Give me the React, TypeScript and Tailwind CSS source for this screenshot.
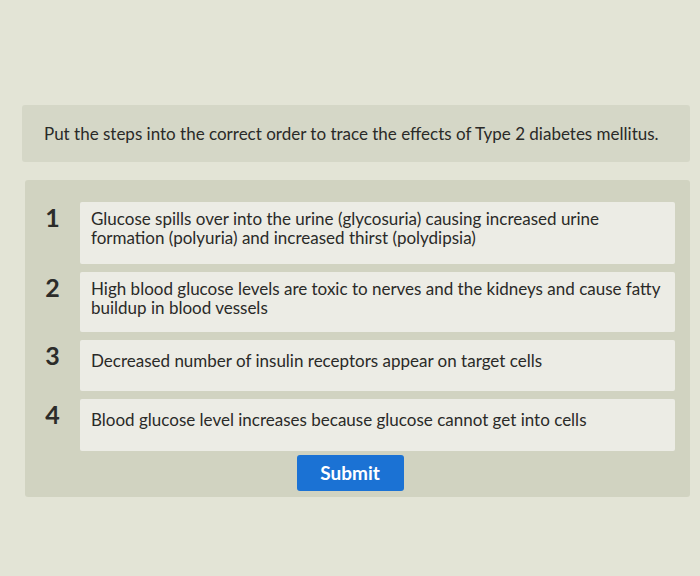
import React from 'react';

const steps = [
  'Glucose spills over into the urine (glycosuria) causing increased urine formation (polyuria) and increased thirst (polydipsia)',
  'High blood glucose levels are toxic to nerves and the kidneys and cause fatty buildup in blood vessels',
  'Decreased number of insulin receptors appear on target cells',
  'Blood glucose level increases because glucose cannot get into cells',
];

const rowHeights = ['h-[62px]', 'h-[60px]', 'h-[51px]', 'h-[52px]'];

const App: React.FC = () => {
  return (
    <div
      className="w-[700px] h-[576px] overflow-hidden bg-[#e3e4d6] pt-[105px] pl-[22px] pr-[10px]"
      style={{ fontFamily: 'Lato, "Open Sans", sans-serif' }}
    >
      <div className="h-[57px] rounded-[3px] bg-[#d5d7c7] pl-[22px] flex items-center text-[17px] text-[#2a2a28]">
        Put the steps into the correct order to trace the effects of Type 2 diabetes mellitus.
      </div>

      <div className="mt-[18px] ml-[3px] rounded-[3px] bg-[#d1d3c1] pt-[22px] pb-[6px] pr-[15px]">
        <div className="flex flex-col gap-[8px]">
          {steps.map((text, i) => (
            <div key={i} className="flex items-start">
              <div className="w-[55px] shrink-0 text-center text-[25px] font-bold leading-none text-[#2c2c2a] pt-[3px]">
                {i + 1}
              </div>
              <div
                className={`flex-1 ${rowHeights[i]} rounded-[2px] bg-[#ecece5] pl-[11px] pr-[12px] text-[17px] leading-[19px] text-[#2a2a28] ${
                  i > 1 ? 'pt-[11px]' : 'pt-[7px]'
                }`}
              >
                {text}
              </div>
            </div>
          ))}
        </div>

        <div className="flex justify-center mt-[4px]">
          <button className="w-[107px] h-[36px] rounded-[3px] bg-[#1b72d4] text-white text-[19px] font-bold">
            Submit
          </button>
        </div>
      </div>
    </div>
  );
};

export default App;
